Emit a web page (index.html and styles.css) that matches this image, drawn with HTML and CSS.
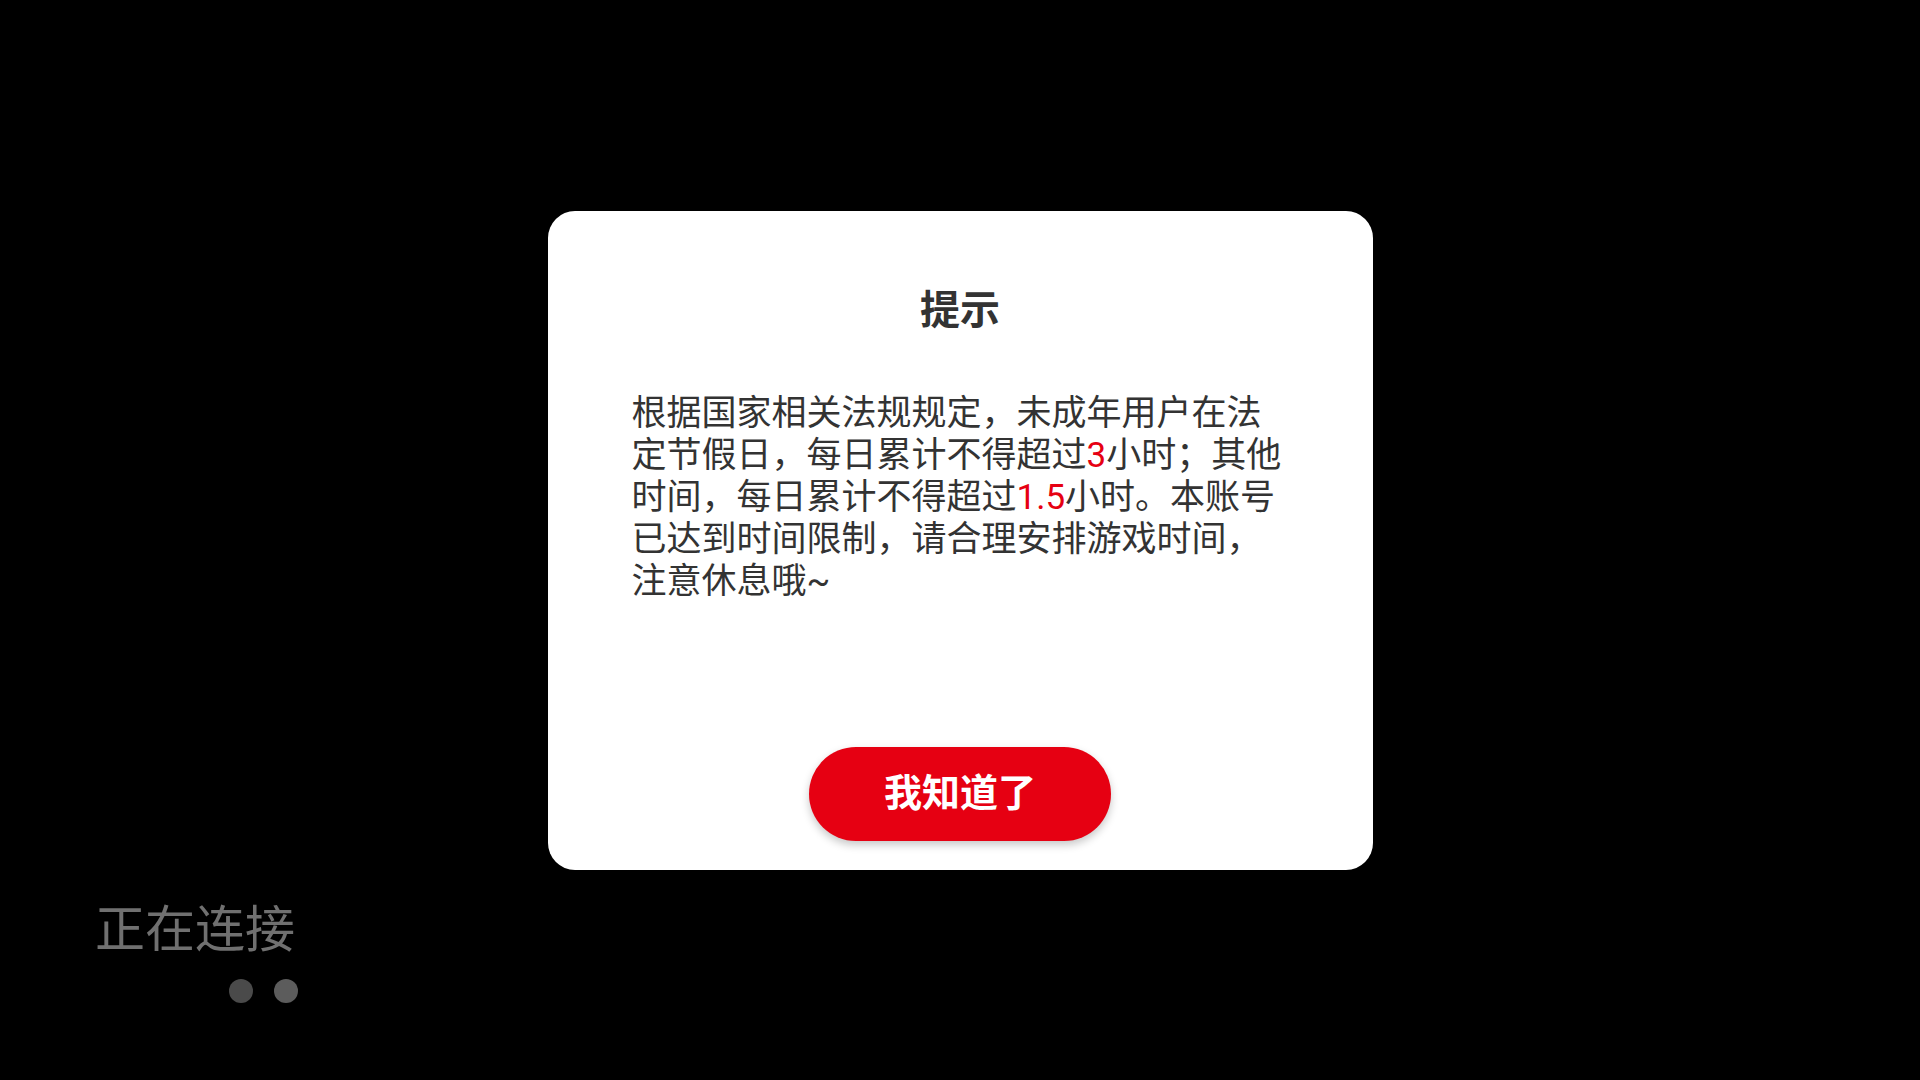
FILE: index.html
```html
<!DOCTYPE html>
<html lang="zh-CN">
<head>
<meta charset="utf-8">
<title>提示</title>
<link rel="stylesheet" href="styles.css">
</head>
<body>
<div class="screen">
  <div class="dialog">
    <div class="title">提示</div>
    <p class="message">根据国家相关法规规定，未成年用户在法定节假日，每日累计不得超过<span class="hl">3</span>小时；其他时间，每日累计不得超过<span class="hl">1.5</span>小时。本账号已达到时间限制，请合理安排游戏时间，注意休息哦~</p>
    <button class="ok-btn">我知道了</button>
  </div>
</div>
<div class="status">
  <div class="status-text">正在连接</div>
  <div class="dots"><span class="dot dot-a"></span><span class="dot dot-b"></span></div>
</div>
</body>
</html>
```
FILE: styles.css
```css
html, body {
  margin: 0;
  padding: 0;
  background: #000;
}
body {
  width: 1920px;
  height: 1080px;
  overflow: hidden;
  position: relative;
  font-family: "Roboto", "Noto Sans CJK SC", sans-serif;
}
.screen {
  height: 1080px;
  display: flex;
  align-items: center;
  justify-content: center;
}
.dialog {
  width: 825px;
  height: 659px;
  box-sizing: border-box;
  background: #fff;
  border-radius: 27px;
  padding: 76px 0 29px;
  display: flex;
  flex-direction: column;
}
.title {
  font-size: 40px;
  line-height: 48px;
  font-weight: 700;
  color: #333;
  text-align: center;
}
.message {
  margin: 58px 0 0 84px;
  width: 662px;
  font-size: 35px;
  line-height: 42px;
  color: #333;
}
.hl {
  color: #e60012;
}
.ok-btn {
  margin-top: auto;
  align-self: center;
  width: 302px;
  height: 94px;
  border: none;
  border-radius: 47px;
  background: #e60012;
  color: #fff;
  font-family: "Roboto", "Noto Sans CJK SC", sans-serif;
  font-size: 38px;
  line-height: 46px;
  font-weight: 700;
  box-shadow: 0 4px 8px rgba(0, 0, 0, 0.22);
  padding: 0 0 2px;
}
.status {
  position: absolute;
  left: 95px;
  top: 904px;
}
.status-text {
  font-size: 50px;
  line-height: 52px;
  color: #707070;
}
.dots {
  margin: 23px 0 0 134px;
  display: flex;
  gap: 21px;
}
.dot {
  width: 24px;
  height: 24px;
  border-radius: 50%;
}
.dot-a {
  background: #4a4a4a;
}
.dot-b {
  background: #5c5c5c;
}
```
